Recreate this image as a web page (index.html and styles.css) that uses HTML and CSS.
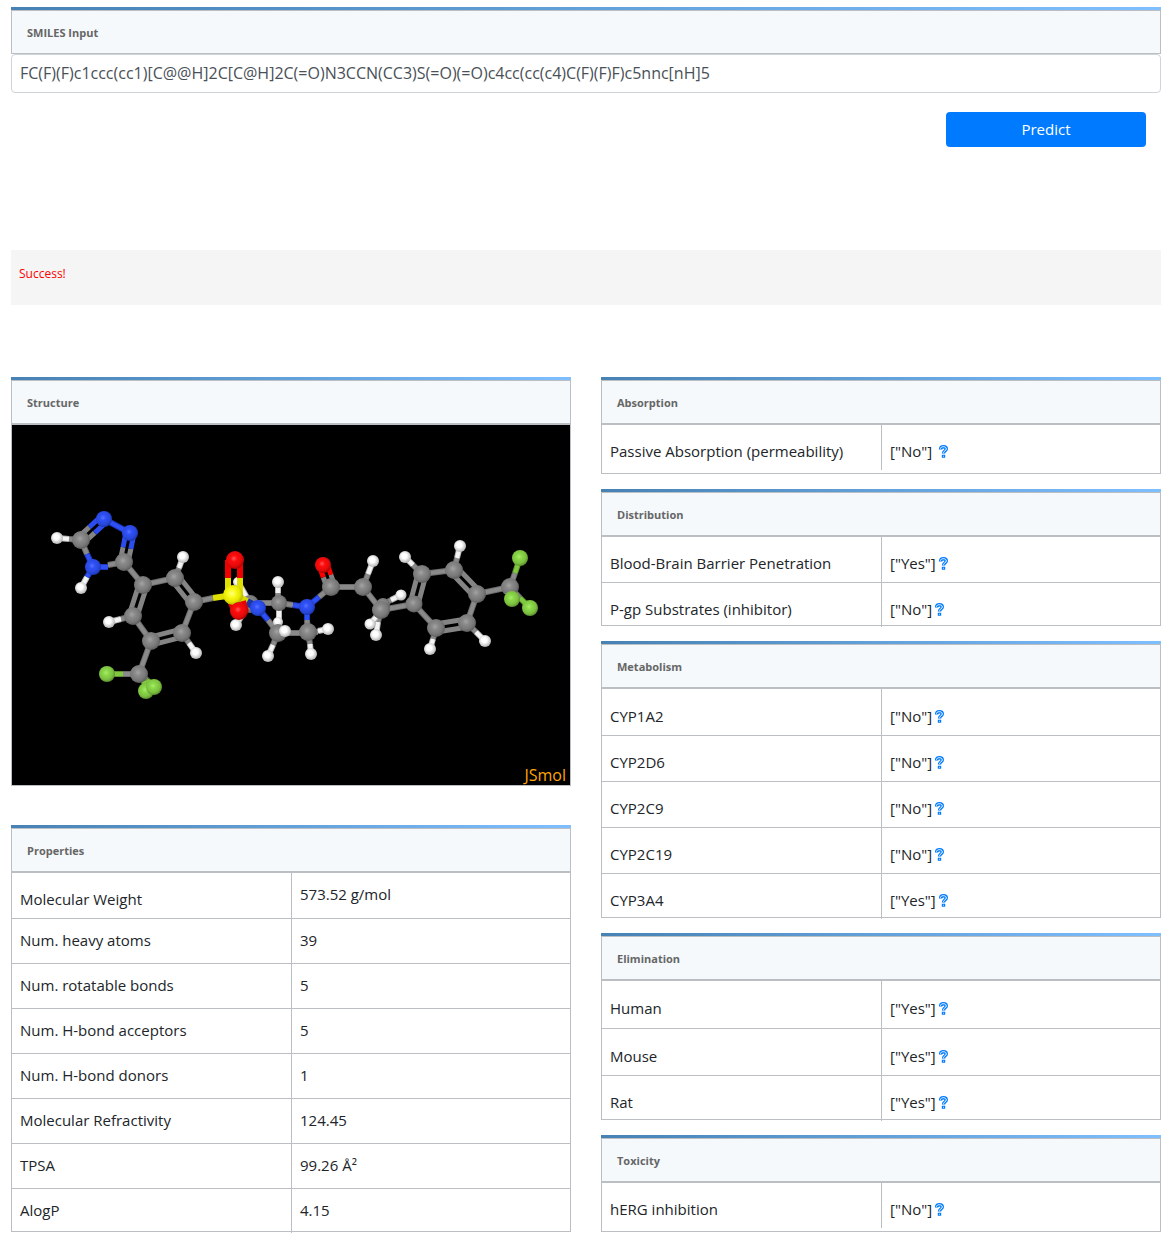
FILE: index.html
```html
<!DOCTYPE html>
<html lang="en">
<head>
<meta charset="utf-8">
<meta name="viewport" content="width=device-width, initial-scale=1">
<title>ADMET Prediction</title>
<link rel="stylesheet" href="styles.css">
</head>
<body>
<svg class="defs" width="0" height="0" aria-hidden="true">
  <symbol id="help" viewBox="0 0 9 13">
    <path d="M1.6 4.4C1.6 2.2 2.8 1.7 4.4 1.7C6.2 1.7 7.3 2.6 7.3 4C7.3 5.8 4.5 5.9 4.5 8.6M4.5 9.7V12.7" fill="none" stroke="#007bff" stroke-width="3.4"/>
    <path d="M1.4 3.7C1.8 2.2 2.8 1.7 4.4 1.7C6.2 1.7 7.3 2.6 7.3 4C7.3 5.8 4.5 5.9 4.5 7.8M4.5 10.8V11.6" fill="none" stroke="#fff" stroke-width="1"/>
  </symbol>
</svg>
<main class="page">
  <form class="query">
    <section class="panel">
      <h2 class="panel-title"><label for="smiles">SMILES Input</label></h2>
    </section>
    <input class="smiles" id="smiles" type="text" value="FC(F)(F)c1ccc(cc1)[C@@H]2C[C@H]2C(=O)N3CCN(CC3)S(=O)(=O)c4cc(cc(c4)C(F)(F)F)c5nnc[nH]5">
    <button class="predict" type="button">Predict</button>
  </form>

  <p class="status" role="status">Success!</p>

  <div class="results">
    <div class="column column-left">
      <section class="panel structure">
        <h2 class="panel-title">Structure</h2>
        <div class="panel-body">
          <svg class="molecule" viewBox="12 425 558 360" role="img" aria-label="3D molecule">
            <defs>
              <radialGradient id="gc" cx=".44" cy=".42" r=".6"><stop offset="0" stop-color="#a4a4a4"/><stop offset=".3" stop-color="#8a8a8a"/><stop offset=".7" stop-color="#787878"/><stop offset="1" stop-color="#5a5a5a"/></radialGradient>
              <radialGradient id="gh" cx=".44" cy=".42" r=".6"><stop offset=".35" stop-color="#fff"/><stop offset="1" stop-color="#b0b0b0"/></radialGradient>
              <radialGradient id="gn" cx=".44" cy=".42" r=".6"><stop offset="0" stop-color="#5674ff"/><stop offset=".3" stop-color="#3050f8"/><stop offset=".7" stop-color="#2848dc"/><stop offset="1" stop-color="#1a34a8"/></radialGradient>
              <radialGradient id="go" cx=".44" cy=".42" r=".6"><stop offset="0" stop-color="#ff5a5a"/><stop offset=".3" stop-color="#ff0c0c"/><stop offset=".7" stop-color="#e40a0a"/><stop offset="1" stop-color="#a80000"/></radialGradient>
              <radialGradient id="gf" cx=".44" cy=".42" r=".6"><stop offset="0" stop-color="#a8ec6c"/><stop offset=".3" stop-color="#8ad848"/><stop offset=".7" stop-color="#7cc040"/><stop offset="1" stop-color="#56882c"/></radialGradient>
              <radialGradient id="gs" cx=".44" cy=".42" r=".6"><stop offset="0" stop-color="#ffff90"/><stop offset=".3" stop-color="#fcfc20"/><stop offset=".7" stop-color="#e6e600"/><stop offset="1" stop-color="#a8a800"/></radialGradient>
              <path id="c2" d="M92 530L81 540M127 548L124 562M143 585L133 616M175 578L194 602M182 633L151 641M327 576L331 587M414 604L422 574M454 570L477 594M467 623L436 628"/>
              <path id="n2" d="M104 519L92 530M130 533L127 548"/>
              <path id="c1" d="M81 540L87 554M81 540L69 539M108 565L124 562L143 585L175 578L179 568M194 602L182 633L189 643M151 641L133 616L121 619M151 641L139 674H123M139 674L147 680M194 602L213 598M250 603H279L293 605M278 593V603M268 620L278 633H308L307 620M308 632H318M308 632L310 644M278 633L273 645M319 597L331 587H363L368 574M363 587L381 610L414 604M381 610L378 622M382 605L391 600M381 610L376 617M414 604L436 628L433 639M422 574L413 565M422 574L454 570L457 558M477 594L467 623L476 632M477 594L510 587L515 573M510 587L520 598"/>
              <path id="h1" d="M69 539L57 538M87 577L81 588M179 568L183 557M189 643L196 653M121 619L109 622M278 593V582M279 603V622M318 631L328 629M310 644L311 655M273 645L268 656M368 574L373 561M378 622L376 635M391 600L401 595M376 617L370 624M433 639L430 649M413 565L405 557M457 558L460 546M476 632L485 641M250 603L238 582M250 603L236 625"/>
              <path id="n1" d="M104 519L130 533M87 554L93 567H108M93 567L87 577M246 602L258 608L268 620M293 605L307 607V620M307 607L319 597"/>
              <path id="f1" d="M123 674H107M143 677L146 691M147 680L154 687M515 573L520 558M520 598L530 608"/>
            </defs>
            <rect x="12" y="425" width="558" height="360" fill="#000"/>
            <g fill="none">
              <use href="#c2" stroke="#848484" stroke-width="13"/>
              <use href="#n2" stroke="#2b4cef" stroke-width="13"/>
              <path d="M327 576L323 564" stroke="#f00" stroke-width="13"/>
              <path d="M104 519L81 540M130 533L124 562M143 585L133 616M175 578L194 602M182 633L151 641M323 564L331 587M414 604L422 574M454 570L477 594M467 623L436 628" stroke="#000" stroke-width="3"/>
              <use href="#c1" stroke="#6c6c6c" stroke-width="6"/>
              <use href="#c1" stroke="#8a8a8a" stroke-width="4"/>
              <use href="#h1" stroke="#b8b8b8" stroke-width="6"/>
              <use href="#h1" stroke="#f4f4f4" stroke-width="4"/>
              <use href="#n1" stroke="#1d38c0" stroke-width="6"/>
              <use href="#n1" stroke="#2e50f5" stroke-width="4"/>
              <use href="#f1" stroke="#5b962c" stroke-width="6"/>
              <use href="#f1" stroke="#80c840" stroke-width="4"/>
            </g>
            <g fill="url(#gh)">
              <circle cx="57" cy="538" r="6"/><circle cx="81" cy="588" r="6"/><circle cx="183" cy="557" r="6"/><circle cx="196" cy="653" r="6"/><circle cx="109" cy="622" r="6"/><circle cx="238" cy="582" r="5"/><circle cx="236" cy="625" r="6"/><circle cx="278" cy="582" r="6"/><circle cx="278" cy="622" r="5"/><circle cx="268" cy="656" r="6"/><circle cx="328" cy="629" r="6"/><circle cx="311" cy="654" r="6"/><circle cx="373" cy="561" r="6"/><circle cx="401" cy="595" r="5.5"/><circle cx="370" cy="624" r="5.5"/><circle cx="376" cy="635" r="6"/><circle cx="405" cy="557" r="6"/><circle cx="460" cy="546" r="6"/><circle cx="485" cy="641" r="6"/><circle cx="430" cy="649" r="6"/>
            </g>
            <g fill="url(#gc)">
              <circle cx="81" cy="540" r="9"/><circle cx="124" cy="562" r="9"/><circle cx="143" cy="585" r="9"/><circle cx="175" cy="578" r="9"/><circle cx="194" cy="602" r="9"/><circle cx="182" cy="633" r="9"/><circle cx="151" cy="641" r="9"/><circle cx="133" cy="616" r="9"/><circle cx="139" cy="674" r="9"/><circle cx="250" cy="604" r="9"/><circle cx="279" cy="603" r="8"/><circle cx="278" cy="633" r="9"/><circle cx="308" cy="632" r="9"/><circle cx="331" cy="587" r="9"/><circle cx="363" cy="587" r="9"/><circle cx="383" cy="605" r="7"/><circle cx="381" cy="610" r="9"/><circle cx="414" cy="604" r="8.5"/><circle cx="422" cy="574" r="9"/><circle cx="454" cy="570" r="9"/><circle cx="477" cy="594" r="9"/><circle cx="467" cy="623" r="9"/><circle cx="436" cy="628" r="9"/><circle cx="510" cy="587" r="9"/>
            </g>
            <circle cx="285" cy="631" r="6" fill="url(#gh)"/>
            <g fill="none" stroke-width="6">
              <path d="M213 598L233 595" stroke="#e0e000" stroke-width="6"/>
              <path d="M233 595L247 602" stroke="#d8d800" stroke-width="8"/>
              <path d="M247 602L258 608" stroke="#1c36a8" stroke-width="8"/>
              <path d="M228 595V578M240 595V578" stroke="#e0e000"/>
              <path d="M228 578V560M240 578V560" stroke="#f00000"/>
              <path d="M229 597L231 603M240 596L243 601" stroke="#d8d800"/>
              <path d="M231 603L235 612M243 601L246 612" stroke="#e80000"/>
            </g>
            <g fill="url(#gn)">
              <circle cx="104" cy="519" r="8"/><circle cx="130" cy="533" r="8"/><circle cx="93" cy="567" r="8"/><circle cx="258" cy="608" r="8"/><circle cx="307" cy="607" r="8"/>
            </g>
            <g fill="url(#go)"><circle cx="235" cy="560" r="9"/><circle cx="323" cy="565" r="8"/></g>
            <circle cx="233" cy="595" r="10" fill="url(#gs)"/>
            <circle cx="239" cy="611" r="9" fill="url(#go)"/>
            <g fill="url(#gf)">
              <circle cx="107" cy="674" r="8"/><circle cx="146" cy="691" r="8"/><circle cx="154" cy="687" r="8"/><circle cx="520" cy="558" r="8"/><circle cx="512" cy="599" r="8"/><circle cx="530" cy="608" r="8"/>
            </g>
            <text class="watermark" x="566" y="781" text-anchor="end">JSmol</text>
          </svg>
        </div>
      </section>

      <section class="panel">
        <h2 class="panel-title">Properties</h2>
        <div class="panel-body">
          <table class="data properties">
            <tr class="lead"><th scope="row">Molecular Weight</th><td>573.52 g/mol</td></tr>
            <tr><th scope="row">Num. heavy atoms</th><td>39</td></tr>
            <tr><th scope="row">Num. rotatable bonds</th><td>5</td></tr>
            <tr><th scope="row">Num. H-bond acceptors</th><td>5</td></tr>
            <tr><th scope="row">Num. H-bond donors</th><td>1</td></tr>
            <tr><th scope="row">Molecular Refractivity</th><td>124.45</td></tr>
            <tr><th scope="row">TPSA</th><td>99.26 Å²</td></tr>
            <tr><th scope="row">AlogP</th><td>4.15</td></tr>
          </table>
        </div>
      </section>
    </div>

    <div class="column">
      <section class="panel">
        <h2 class="panel-title">Absorption</h2>
        <div class="panel-body">
          <table class="data single">
            <tr><th scope="row">Passive Absorption (permeability)</th><td>["No"] <a class="help" href="#" aria-label="Help"><svg><use href="#help"/></svg></a></td></tr>
          </table>
        </div>
      </section>

      <section class="panel">
        <h2 class="panel-title">Distribution</h2>
        <div class="panel-body">
          <table class="data">
            <tr><th scope="row">Blood-Brain Barrier Penetration</th><td>["Yes"]<a class="help" href="#" aria-label="Help"><svg><use href="#help"/></svg></a></td></tr>
            <tr><th scope="row">P-gp Substrates (inhibitor)</th><td>["No"]<a class="help" href="#" aria-label="Help"><svg><use href="#help"/></svg></a></td></tr>
          </table>
        </div>
      </section>

      <section class="panel">
        <h2 class="panel-title">Metabolism</h2>
        <div class="panel-body">
          <table class="data long">
            <tr class="roomy"><th scope="row">CYP1A2</th><td>["No"]<a class="help" href="#" aria-label="Help"><svg><use href="#help"/></svg></a></td></tr>
            <tr><th scope="row">CYP2D6</th><td>["No"]<a class="help" href="#" aria-label="Help"><svg><use href="#help"/></svg></a></td></tr>
            <tr><th scope="row">CYP2C9</th><td>["No"]<a class="help" href="#" aria-label="Help"><svg><use href="#help"/></svg></a></td></tr>
            <tr><th scope="row">CYP2C19</th><td>["No"]<a class="help" href="#" aria-label="Help"><svg><use href="#help"/></svg></a></td></tr>
            <tr><th scope="row">CYP3A4</th><td>["Yes"]<a class="help" href="#" aria-label="Help"><svg><use href="#help"/></svg></a></td></tr>
          </table>
        </div>
      </section>

      <section class="panel">
        <h2 class="panel-title">Elimination</h2>
        <div class="panel-body">
          <table class="data long">
            <tr class="roomy tall"><th scope="row">Human</th><td>["Yes"]<a class="help" href="#" aria-label="Help"><svg><use href="#help"/></svg></a></td></tr>
            <tr class="roomy"><th scope="row">Mouse</th><td>["Yes"]<a class="help" href="#" aria-label="Help"><svg><use href="#help"/></svg></a></td></tr>
            <tr><th scope="row">Rat</th><td>["Yes"]<a class="help" href="#" aria-label="Help"><svg><use href="#help"/></svg></a></td></tr>
          </table>
        </div>
      </section>

      <section class="panel">
        <h2 class="panel-title">Toxicity</h2>
        <div class="panel-body">
          <table class="data single">
            <tr><th scope="row">hERG inhibition</th><td>["No"]<a class="help" href="#" aria-label="Help"><svg><use href="#help"/></svg></a></td></tr>
          </table>
        </div>
      </section>
    </div>
  </div>
</main>
</body>
</html>
```
FILE: styles.css
```css
* {
  box-sizing: border-box;
}

body {
  margin: 0;
  background: #fff;
  color: #212529;
  font-family: "Open Sans", "Noto Sans", sans-serif;
  font-size: 15px;
  line-height: 24px;
}

.defs {
  display: block;
}

.page {
  padding: 7px 10px 11px 11px;
}

.query {
  display: flex;
  flex-direction: column;
}

/* Panels: gradient strip, tinted title bar, bordered body */
.panel::before {
  content: "";
  display: block;
  height: 3px;
  background: linear-gradient(to right, #4682b4, #7fbfff);
}

.panel-title {
  margin: 0;
  padding: 11px 15px 9px;
  border: 1px solid #bbbfc4;
  background: #f5f9fc;
  color: #666;
  font-size: 11px;
  font-weight: 700;
  line-height: 22px;
}

.panel-body {
  border: 1px solid #bbbfc4;
}

.smiles {
  width: 100%;
  height: 39px;
  padding: 5px 8px 7px;
  border: 1px solid #ced4da;
  border-radius: 4px;
  background: #fff;
  color: #495057;
  font: inherit;
  font-size: 16px;
}

.predict {
  align-self: flex-end;
  width: 200px;
  height: 35px;
  margin: 19px 15px 0 0;
  padding: 0 0 2px;
  border: 0;
  border-radius: 4px;
  background: #007bff;
  color: #fff;
  font: inherit;
}

.status {
  margin: 103px 0 72px;
  padding: 12px 8px 19px;
  background: #f5f5f5;
  color: #f00;
  font-size: 12px;
}

.results {
  display: grid;
  grid-template-columns: 1fr 1fr;
  gap: 30px;
  align-items: start;
}

.column {
  display: flex;
  flex-direction: column;
  gap: 15px;
}

.column-left {
  gap: 39px;
}

.molecule {
  display: block;
  width: 100%;
  height: auto;
}

.watermark {
  fill: #ffa500;
  font-size: 16px;
}

/* The column divider runs just past the panel's bottom edge */
.data {
  width: 100%;
  margin-bottom: -2px;
  border-spacing: 0;
  table-layout: fixed;
}

.data.single {
  margin-bottom: 3px;
}

.data th,
.data td {
  height: 46px;
  padding: 14px 8px 0;
  border-bottom: 1px solid #bbbfc4;
  font-weight: 400;
  text-align: left;
  vertical-align: top;
}

.data td {
  border-left: 1px solid #bbbfc4;
}

.data .roomy > * {
  height: 47px;
  padding-top: 15px;
}

.data .tall > * {
  height: 48px;
}

.data tr:last-child > * {
  height: 44px;
  border-bottom: 0;
}

.data.single tr > *,
.data.long tr:last-child > * {
  height: 45px;
}

.properties th,
.properties td {
  height: 45px;
  padding-top: 9px;
}

.properties .lead > * {
  height: 46px;
}

.properties .lead th {
  padding-top: 14px;
}

.help {
  margin-left: 3px;
}

.help svg {
  width: 9px;
  height: 13px;
  vertical-align: -1px;
}
```
